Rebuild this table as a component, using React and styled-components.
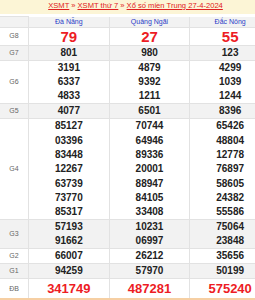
import styled, { createGlobalStyle } from 'styled-components';

const GlobalStyle = createGlobalStyle`
  html, body {
    margin: 0;
    padding: 0;
    background: #fff;
    overflow: hidden;
  }
  body {
    font-family: "Liberation Sans", Arial, sans-serif;
  }
`;

const Page = styled.div`
  width: 271px;
`;

const Breadcrumb = styled.div`
  background: #fcf5d6;
  height: 14px;
  line-height: 12px;
  text-align: center;
  font-size: 7.6px;
  color: #e02020;
  margin-bottom: 2px;

  a {
    color: #e02020;
    text-decoration: underline;
  }

  span {
    margin: 0 2px;
  }
`;

const Table = styled.table`
  width: 271px;
  border-collapse: collapse;
  table-layout: fixed;
  border-bottom: 2px solid #f6cfa3;
`;

const Row = styled.tr`
  background: ${({ $shade }) => ($shade ? '#f2f2f2' : '#fff')};
`;

const Label = styled.td`
  width: 28px;
  padding: 0;
  border: 1px solid #e2e2e2;
  border-left: none;
  text-align: center;
  font-size: 7px;
  line-height: 10px;
  color: #666;
`;

const Head = styled.th`
  padding: 0;
  height: 10px;
  border: 1px solid #e2e2e2;
  border-top: none;
  font-size: 7px;
  font-weight: normal;
  color: #2b3dc8;
  line-height: 10px;
`;

const Cell = styled.td`
  padding: 0;
  border: 1px solid #e2e2e2;
  text-align: center;
  vertical-align: middle;
`;

const Num = styled.div`
  font-weight: bold;
  font-size: ${({ $size }) => $size || 10}px;
  line-height: ${({ $lh }) => $lh || 14}px;
  color: ${({ $red }) => ($red ? '#ed1c24' : '#222')};
`;

const provinces = ['Đà Nẵng', 'Quảng Ngãi', 'Đắc Nông'];

const prizes = [
  { label: 'G8', red: true, size: 15, lh: 17, values: [['79'], ['27'], ['55']] },
  { label: 'G7', shade: true, values: [['801'], ['980'], ['123']] },
  {
    label: 'G6',
    lh: 14.3,
    values: [
      ['3191', '6337', '4833'],
      ['4879', '9392', '1211'],
      ['4299', '1039', '1244'],
    ],
  },
  { label: 'G5', shade: true, values: [['4077'], ['6501'], ['8396']] },
  {
    label: 'G4',
    lh: 14.3,
    values: [
      ['85127', '03396', '83448', '12267', '63739', '73770', '85317'],
      ['70744', '64946', '89336', '20001', '88947', '84105', '33408'],
      ['65426', '48804', '12778', '76897', '58605', '24382', '55586'],
    ],
  },
  {
    label: 'G3',
    shade: true,
    values: [
      ['57193', '91662'],
      ['10231', '06997'],
      ['75064', '23848'],
    ],
  },
  { label: 'G2', values: [['66007'], ['26212'], ['35656']] },
  { label: 'G1', shade: true, values: [['94259'], ['57970'], ['50199']] },
  { label: 'ĐB', red: true, size: 13, lh: 19, values: [['341749'], ['487281'], ['575240']] },
];

export default function App() {
  return (
    <Page>
      <GlobalStyle />
      <Breadcrumb>
        <a>XSMT</a>
        <span>»</span>
        <a>XSMT thứ 7</a>
        <span>»</span>
        <a>Xổ số miền Trung 27-4-2024</a>
      </Breadcrumb>
      <Table>
        <thead>
          <Row $shade>
            <Label as="th" />
            {provinces.map((p) => (
              <Head key={p}>{p}</Head>
            ))}
          </Row>
        </thead>
        <tbody>
          {prizes.map((prize) => (
            <Row key={prize.label} $shade={prize.shade}>
              <Label>{prize.label}</Label>
              {prize.values.map((col, i) => (
                <Cell key={i}>
                  {col.map((n) => (
                    <Num key={n} $red={prize.red} $size={prize.size} $lh={prize.lh}>
                      {n}
                    </Num>
                  ))}
                </Cell>
              ))}
            </Row>
          ))}
        </tbody>
      </Table>
    </Page>
  );
}
